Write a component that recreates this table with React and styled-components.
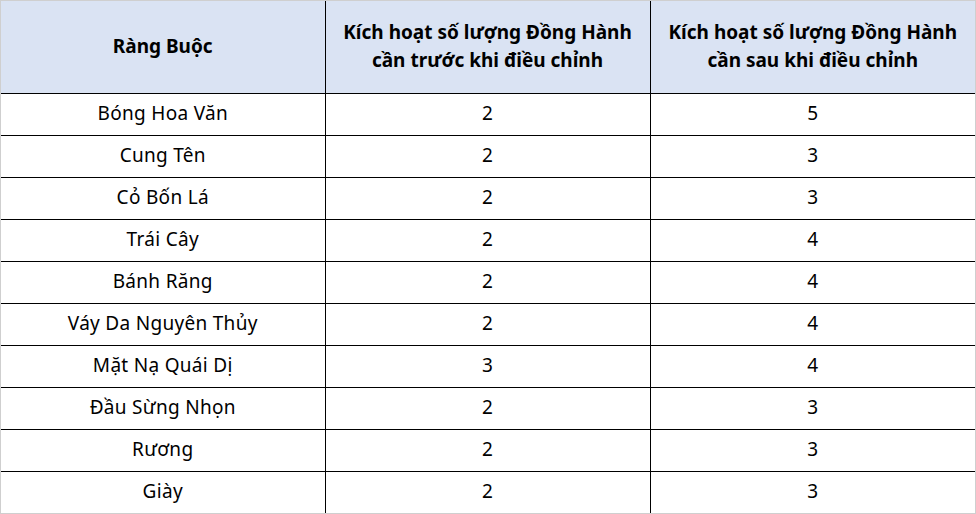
import styled, { createGlobalStyle } from 'styled-components';

const GlobalStyle = createGlobalStyle`
  html, body {
    margin: 0;
    padding: 0;
    background: #ffffff;
  }
  body {
    font-family: "Noto Sans", "Open Sans", "DejaVu Sans", sans-serif;
    color: #000;
  }
`;

const Frame = styled.div`
  width: 976px;
  height: 514px;
  box-sizing: border-box;
  border: 1px solid #cfcfcf;
  overflow: hidden;
`;

const Table = styled.table`
  width: 974px;
  border-collapse: collapse;
  table-layout: fixed;
`;

const HeadCell = styled.th`
  height: 90px;
  padding: 0 4px 2px;
  background: #dae3f3;
  font-size: 19px;
  font-weight: 700;
  line-height: 28px;
  text-align: center;
  vertical-align: middle;
  border-right: 1px solid #000;
  border-bottom: 1px solid #000;

  &:last-child {
    border-right: none;
  }
`;

const Row = styled.tr`
  &:last-child td {
    border-bottom: none;
  }
`;

const Cell = styled.td`
  height: 38px;
  padding: 0 0 3px;
  font-size: 19px;
  line-height: 26px;
  text-align: center;
  vertical-align: middle;
  letter-spacing: 0.3px;
  border-right: 1px solid #000;
  border-bottom: 1px solid #000;

  &:last-child {
    border-right: none;
  }
`;

const rows = [
  ['Bóng Hoa Văn', 2, 5],
  ['Cung Tên', 2, 3],
  ['Cỏ Bốn Lá', 2, 3],
  ['Trái Cây', 2, 4],
  ['Bánh Răng', 2, 4],
  ['Váy Da Nguyên Thủy', 2, 4],
  ['Mặt Nạ Quái Dị', 3, 4],
  ['Đầu Sừng Nhọn', 2, 3],
  ['Rương', 2, 3],
  ['Giày', 2, 3],
];

export default function App() {
  return (
    <>
      <GlobalStyle />
      <Frame>
        <Table>
          <colgroup>
            <col style={{ width: 324 }} />
            <col style={{ width: 325 }} />
            <col style={{ width: 325 }} />
          </colgroup>
          <thead>
            <tr>
              <HeadCell>Ràng Buộc</HeadCell>
              <HeadCell>
                Kích hoạt số lượng Đồng Hành
                <br />
                cần trước khi điều chỉnh
              </HeadCell>
              <HeadCell>
                Kích hoạt số lượng Đồng Hành
                <br />
                cần sau khi điều chỉnh
              </HeadCell>
            </tr>
          </thead>
          <tbody>
            {rows.map(([name, before, after]) => (
              <Row key={name}>
                <Cell>{name}</Cell>
                <Cell>{before}</Cell>
                <Cell>{after}</Cell>
              </Row>
            ))}
          </tbody>
        </Table>
      </Frame>
    </>
  );
}
